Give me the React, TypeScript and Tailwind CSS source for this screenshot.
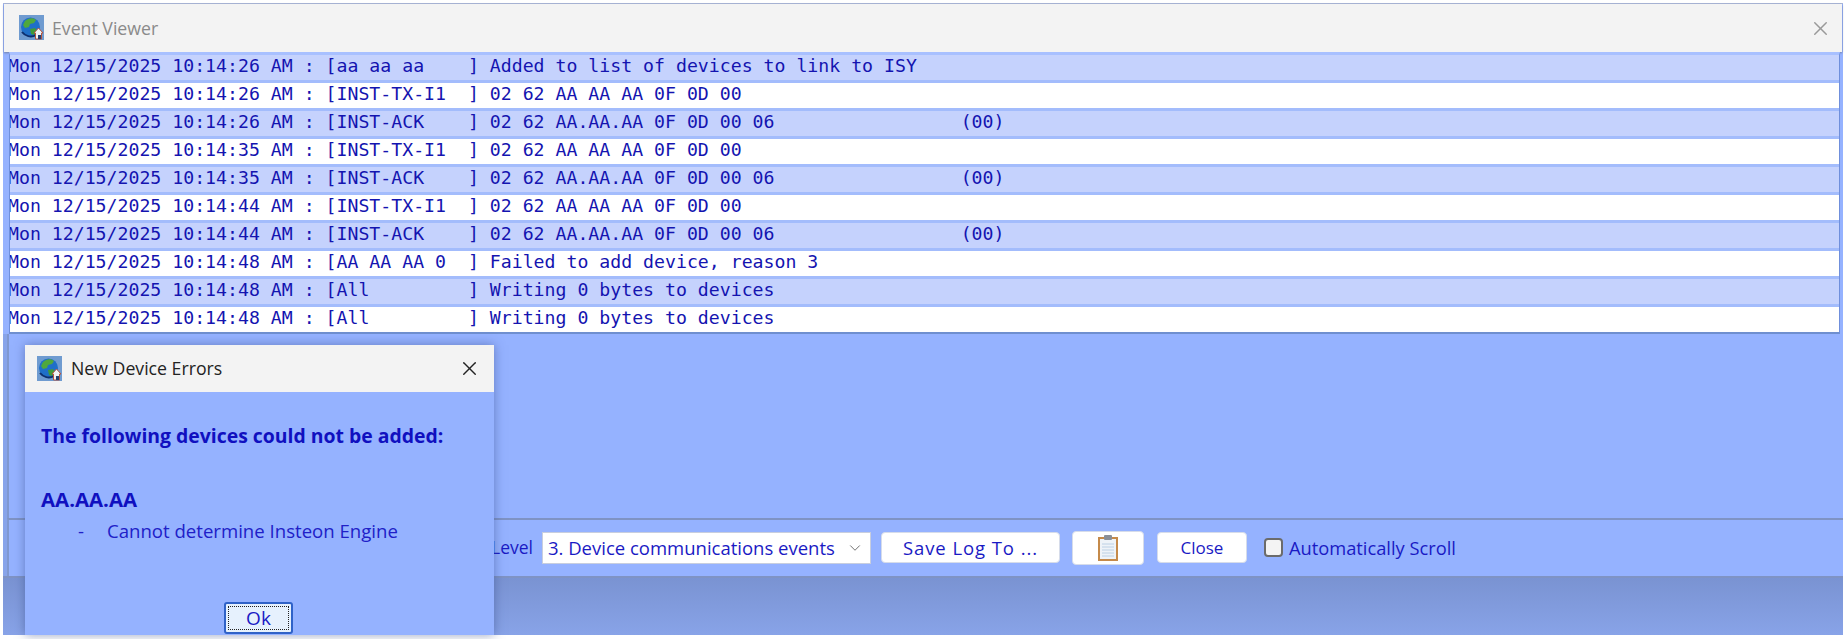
import { X, ChevronDown } from 'lucide-react'

const rows = [
  'Mon 12/15/2025 10:14:26 AM : [aa aa aa    ] Added to list of devices to link to ISY',
  'Mon 12/15/2025 10:14:26 AM : [INST-TX-I1  ] 02 62 AA AA AA 0F 0D 00',
  'Mon 12/15/2025 10:14:26 AM : [INST-ACK    ] 02 62 AA.AA.AA 0F 0D 00 06                 (00)',
  'Mon 12/15/2025 10:14:35 AM : [INST-TX-I1  ] 02 62 AA AA AA 0F 0D 00',
  'Mon 12/15/2025 10:14:35 AM : [INST-ACK    ] 02 62 AA.AA.AA 0F 0D 00 06                 (00)',
  'Mon 12/15/2025 10:14:44 AM : [INST-TX-I1  ] 02 62 AA AA AA 0F 0D 00',
  'Mon 12/15/2025 10:14:44 AM : [INST-ACK    ] 02 62 AA.AA.AA 0F 0D 00 06                 (00)',
  'Mon 12/15/2025 10:14:48 AM : [AA AA AA 0  ] Failed to add device, reason 3',
  'Mon 12/15/2025 10:14:48 AM : [All         ] Writing 0 bytes to devices',
  'Mon 12/15/2025 10:14:48 AM : [All         ] Writing 0 bytes to devices',
]

function AppIcon({ className }: { className: string }) {
  return (
    <svg viewBox="0 0 25 25" className={className}>
      <rect width="25" height="25" fill="#6f9bd0" />
      <circle cx="11.5" cy="12" r="9.5" fill="#1f6fc8" />
      <path d="M6 6c3-3 8-4 11-1l-2 3-4 1-1 3-4 1-2-3z" fill="#4fa83d" />
      <path d="M11 14l5-1 2 3-3 4-3-1z" fill="#3f9a3a" />
      <path d="M3 17c3 4 9 6 14 3" fill="none" stroke="#0d2f6e" strokeWidth="2" />
      <path d="M15 18l4.500-5 4.500 5h-1.500v6h-6v-6z" fill="#eef2f6" stroke="#b5533c" strokeWidth="1" />
      <rect x="19" y="20" width="3" height="4" fill="#24406e" />
    </svg>
  )
}

function ClipboardIcon() {
  return (
    <svg viewBox="0 0 20 26" className="w-[20px] h-[26px]">
      <rect x="1" y="3" width="18" height="22" fill="#eef3f8" stroke="#c58a4a" strokeWidth="2" />
      <path d="M4 9h12M4 12h12M4 15h12M4 18h12M4 21h12" stroke="#bcd0e4" strokeWidth="1" />
      <rect x="6" y="0" width="8" height="5" rx="1" fill="#8a8f98" />
    </svg>
  )
}

function ToolButton({ children, className }: { children: React.ReactNode; className: string }) {
  return (
    <button className={`flex items-center justify-center bg-white rounded-[4px] border border-[#d6dcea] text-[#1a1ac4] ${className}`}>
      {children}
    </button>
  )
}

export default function App() {
  return (
    <div className="relative w-[1846px] h-[639px] overflow-hidden bg-white p-[3px] pb-[4px] font-['Open_Sans','Liberation_Sans',sans-serif]">
      <div className="flex flex-col h-full bg-[#95b2ff] border-t border-[#a9b6d8]">
        <div className="flex items-center justify-between h-[48px] mx-[1px] pl-[15px] pr-[10px] bg-[#f3f3f3] shadow-[0_1px_2px_rgba(80,80,80,0.5)]">
          <div className="flex items-center gap-[8px]">
            <AppIcon className="w-[25px] h-[25px]" />
            <span className="text-[#8a8a8a] text-[17.7px]">Event Viewer</span>
          </div>
          <X className="w-[23px] h-[23px] text-[#999999]" strokeWidth={1.5} />
        </div>

        <div className="ml-[6px] mr-[3px] border-x border-t-[3px] border-b-2 border-x-[#6f8fdc] border-t-[#a8c0ff] border-b-[#6f8fcf] overflow-hidden">
          {rows.map((row, i) => (
            <div
              key={i}
              className={`h-[28px] last:h-[25px] overflow-hidden border-b-[3px] last:border-b-0 border-[#a3bcfc] ${i % 2 === 0 ? 'bg-[#c5d2fd]' : 'bg-white'}`}
            >
              <pre className="-ml-[2px] leading-[22px] text-[18.2px] text-[#1414b0] font-['DejaVu_Sans_Mono',monospace]">{row}</pre>
            </div>
          ))}
        </div>

        <div className="flex-1 flex flex-col">
          <div className="h-[184px] pl-[4px] bg-[#88a4ea]">
            <div className="h-full bg-[#95b2ff] border-l-2 border-[#8098d0]" />
          </div>
          <div className="pl-[4px] bg-[#88a4ea]">
            <div className="flex items-center h-[58px] pb-[1px] pl-[482px] border-t-2 border-[#7f93c4] border-l-2 border-l-[#8098d0] bg-[#95b2ff] text-[#1a1ac4] text-[17.5px]">
              <span className="mr-[9px]">Level</span>
              <div className="flex items-center justify-between w-[329px] h-[32px] mr-[10px] pl-[5px] pr-[6px] bg-white border border-[#c8cede] text-[18.5px]">
                <span>3. Device communications events</span>
                <ChevronDown className="w-[18px] h-[18px] text-[#666666]" strokeWidth={1.25} />
              </div>
              <ToolButton className="w-[179px] h-[31px] mr-[12px] text-[18.5px] tracking-[0.05em]">Save Log To ...</ToolButton>
              <ToolButton className="w-[72px] h-[34px] mr-[13px]"><ClipboardIcon /></ToolButton>
              <ToolButton className="w-[90px] h-[31px] mr-[17px] text-[17px]">Close</ToolButton>
              <span className="w-[19px] h-[19px] mr-[6px] rounded-[4px] bg-[#f4f4f4] border-2 border-[#6b6b6b]" />
              <span className="text-[18.300px]">Automatically Scroll</span>
            </div>
          </div>
          <div className="flex-1 border-t-2 border-[#7f93c4] bg-gradient-to-b from-[#7a93d2] to-[#88a3e8]" />
        </div>
      </div>

      <div className="absolute left-[25px] top-[345px] w-[469px] h-[290px] flex flex-col bg-[#95b2ff] shadow-[0_0_10px_rgba(50,70,130,0.5)]">
        <div className="flex items-center justify-between h-[47px] pl-[12px] pr-[13px] bg-[#f3f3f3]">
          <div className="flex items-center gap-[9px]">
            <AppIcon className="w-[25px] h-[25px]" />
            <span className="text-[#222222] text-[17.7px]">New Device Errors</span>
          </div>
          <X className="w-[23px] h-[23px] text-[#222222]" strokeWidth={1.5} />
        </div>
        <div className="flex-1 flex flex-col pl-[16px] text-[#1010c0]">
          <p className="mt-[30px] font-bold text-[19.4px] leading-[28px]">The following devices could not be added:</p>
          <p className="mt-[35px] font-bold text-[20.4px] leading-[28px]">AA.AA.AA</p>
          <div className="flex mt-[4px] pl-[37px] gap-[23px] text-[18.6px] leading-[28px] text-[#2020c8]">
            <span>-</span>
            <span>Cannot determine Insteon Engine</span>
          </div>
          <button className="self-start ml-[183px] mt-[57px] w-[69px] h-[32px] p-[2px] bg-[#e6f1fd] border-2 border-[#2f62c8] rounded-[3px] text-[#1a1ac4] text-[19px]">
            <span className="flex items-center justify-center h-full border border-dotted border-[#222222]">Ok</span>
          </button>
        </div>
      </div>
    </div>
  )
}
